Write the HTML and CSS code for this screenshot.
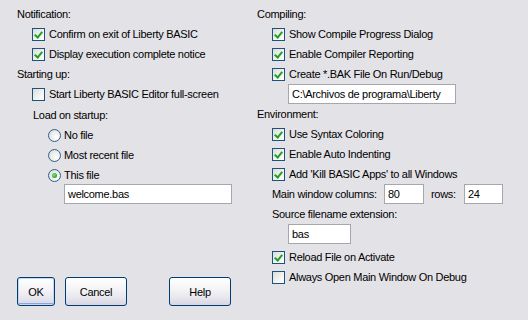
FILE: index.html
```html
<!DOCTYPE html>
<html lang="en">
<head>
  <meta charset="UTF-8" />
  <title>Preferences</title>
  <link rel="stylesheet" href="styles.css">
</head>
<body>
  <div class="dialog">
    <section class="col">
      <div class="head">Notification:</div>
      <div class="check on"><span class="box"></span>Confirm on exit of Liberty BASIC</div>
      <div class="check on"><span class="box"></span>Display execution complete notice</div>
      <div class="head">Starting up:</div>
      <div class="check"><span class="box"></span>Start Liberty BASIC Editor full-screen</div>
      <div class="sub head">Load on startup:</div>
      <div class="radio"><span class="dot"></span>No file</div>
      <div class="radio"><span class="dot"></span>Most recent file</div>
      <div class="radio on"><span class="dot"></span>This file</div>
      <div class="field file"><span class="text">welcome.bas</span></div>

      <div class="buttons">
        <button class="btn ok default">OK</button>
        <button class="btn cancel">Cancel</button>
        <button class="btn help">Help</button>
      </div>
    </section>

    <section class="col">
      <div class="head">Compiling:</div>
      <div class="check on"><span class="box"></span>Show Compile Progress Dialog</div>
      <div class="check on"><span class="box"></span>Enable Compiler Reporting</div>
      <div class="check on"><span class="box"></span>Create *.BAK File On Run/Debug</div>
      <div class="field path"><span class="text">C:\Archivos de programa\Liberty</span></div>
      <div class="head">Environment:</div>
      <div class="check on"><span class="box"></span>Use Syntax Coloring</div>
      <div class="check on"><span class="box"></span>Enable Auto Indenting</div>
      <div class="check on"><span class="box"></span>Add 'Kill BASIC Apps' to all Windows</div>
      <div class="size-row">
        <span class="lbl">Main window columns:</span>
        <div class="field num"><span class="text">80</span></div>
        <span class="lbl rows">rows:</span>
        <div class="field num"><span class="text">24</span></div>
      </div>
      <div class="plain">Source filename extension:</div>
      <div class="field ext"><span class="text">bas</span></div>
      <div class="check on late"><span class="box"></span>Reload File on Activate</div>
      <div class="check"><span class="box"></span>Always Open Main Window On Debug</div>
    </section>
  </div>
</body>
</html>
```

FILE: styles.css
```css
:root {
  --bg: #e3e2e6;
  --text: #000000;
  --edge: #1c5180;
  --tick: #21a121;
  --field-line: #a5a7ad;
  --btn-line: #003c74;
}

* {
  margin: 0;
  padding: 0;
  box-sizing: border-box;
}

body {
  background: var(--bg);
  color: var(--text);
  font-family: "Liberation Sans", Arial, sans-serif;
  font-size: 11px;
  letter-spacing: -0.3px;
  width: 528px;
  height: 320px;
  overflow: hidden;
}

.dialog {
  display: grid;
  grid-template-columns: 240px 1fr;
  align-items: start;
  padding: 4px 0 0 17px;
}

.col {
  display: flex;
  flex-direction: column;
}

.head,
.plain,
.check,
.radio {
  height: 20px;
  line-height: 20px;
  white-space: nowrap;
}

.head.sub {
  padding-left: 16px;
  margin-top: 1px;
}

.plain {
  padding-left: 15px;
}

/* checkboxes */
.check {
  display: flex;
  align-items: center;
  padding-left: 15px;
}

.check .box {
  width: 13px;
  height: 13px;
  border: 1px solid var(--edge);
  background: linear-gradient(135deg, #dcdcd6 0%, #f4f4f2 60%, #ffffff 100%);
  margin-right: 4px;
  flex: none;
  position: relative;
}

.check.on .box::after {
  content: "";
  position: absolute;
  left: 3px;
  top: 1px;
  width: 3px;
  height: 6px;
  border-right: 2px solid var(--tick);
  border-bottom: 2px solid var(--tick);
  transform: rotate(40deg);
}

.check.late {
  margin-top: 3px;
}

/* radios */
.radio {
  display: flex;
  align-items: center;
  padding-left: 31px;
}

.radio .dot {
  width: 13px;
  height: 13px;
  border: 1px solid #2f5f8c;
  border-radius: 50%;
  background: radial-gradient(circle at 65% 65%, #ffffff 0%, #ececea 50%, #d4d4ce 100%);
  margin-right: 3px;
  flex: none;
  display: flex;
  align-items: center;
  justify-content: center;
}

.radio.on .dot::after {
  content: "";
  width: 5px;
  height: 5px;
  border-radius: 50%;
  background: radial-gradient(circle at 40% 40%, #8fe08f 0%, #2eb52e 55%, #1a8c1a 100%);
}

/* text fields */
.field {
  height: 20px;
  background: #ffffff;
  border: 1px solid var(--field-line);
  line-height: 18px;
  padding-left: 3px;
  white-space: nowrap;
  overflow: hidden;
}

.field.file {
  width: 168px;
  margin-left: 47px;
  margin-top: -1px;
}

.field.path {
  width: 168px;
  margin-left: 31px;
}

.field.ext {
  width: 63px;
  margin-left: 31px;
}

.field.num {
  width: 40px;
}

.size-row {
  display: flex;
  align-items: center;
  height: 20px;
  padding-left: 15px;
}

.size-row .lbl {
  width: 112px;
}

.size-row .lbl.rows {
  width: 40px;
  padding-left: 7px;
}

.size-row .field.num:last-child {
  width: 39px;
}

/* buttons */
.buttons {
  display: flex;
  margin-top: 73px;
}

.btn {
  height: 29px;
  border: 1px solid var(--btn-line);
  border-radius: 3px;
  background: linear-gradient(#ffffff 0%, #f3f3f6 45%, #e4e3ec 80%, #d6d5e2 100%);
  font-family: "Liberation Sans", Arial, sans-serif;
  font-size: 11px;
  letter-spacing: -0.3px;
  color: var(--text);
}

.btn.default {
  box-shadow: inset 0 0 0 1px #c6d5f0, inset 0 -2px 0 #8aa6dc;
}

.btn.ok {
  width: 38px;
}

.btn.cancel {
  width: 62px;
  margin-left: 10px;
}

.btn.help {
  width: 62px;
  margin-left: 42px;
}
```
